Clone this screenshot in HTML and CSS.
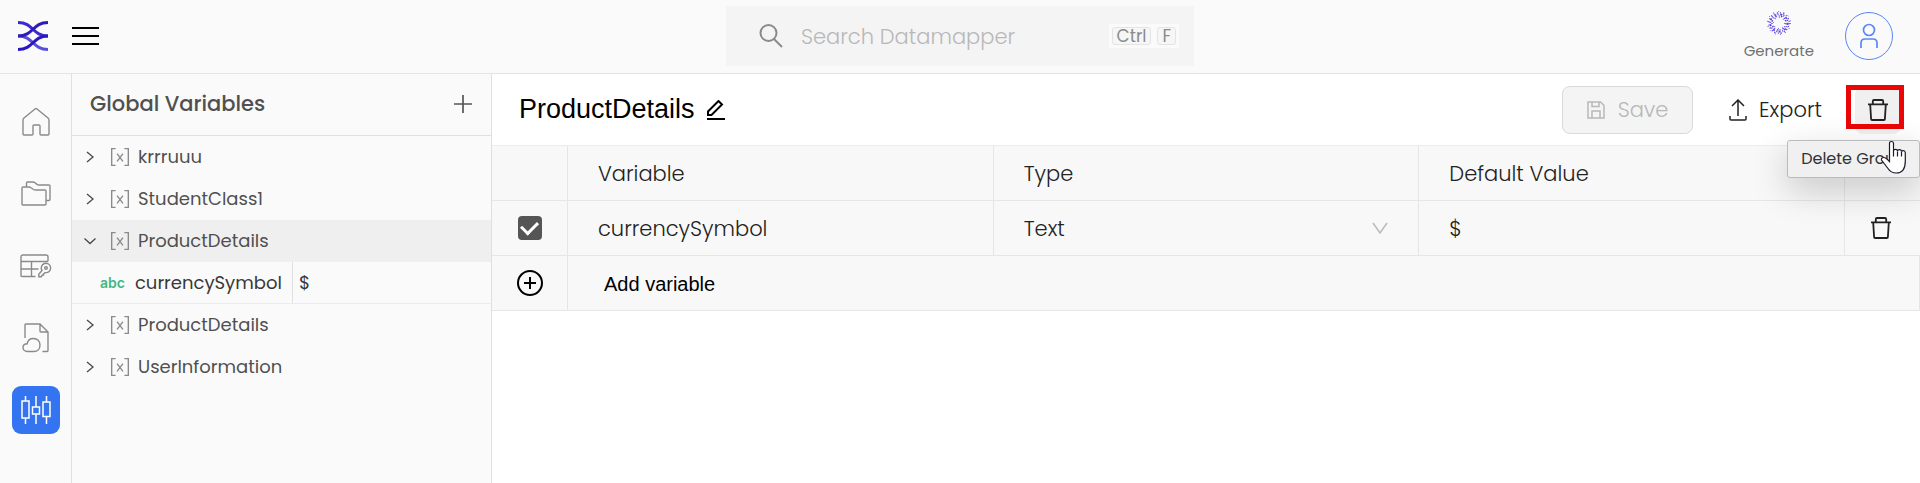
FILE: index.html
```html
<!DOCTYPE html>
<html lang="en">
<head>
<meta charset="utf-8">
<title>Datamapper - Global Variables</title>
<link rel="stylesheet" href="styles.css">
</head>
<body>
<svg class="defs" aria-hidden="true">
  <defs>
    <symbol id="i-var" viewBox="0.8 0.8 18.4 18.4"><path d="M5.500 1.500H1.500v17h4M14.500 1.500h4v17h-4M7 6.500l6 8M13 6.500l-6 8"/></symbol>
    <symbol id="i-right" viewBox="0 0 12 12"><path d="M3 1l6 5-6 5"/></symbol>
    <symbol id="i-down" viewBox="0 0 12 12"><path d="M0.500 3.500l5.500 5 5.500-5"/></symbol>
    <symbol id="i-trash" viewBox="0 0 20 22"><path d="M0 5.300h20M4.800 5V2.200q0-1.200 1.200-1.200h8q1.200 0 1.200 1.200V5M2.200 5.500l.9 14.500q0 1 1 1h11.800q1 0 1-1l.9-14.500"/></symbol>
  </defs>
</svg>

<header class="topbar">
  <div class="brand">
    <a class="logo" href="#" aria-label="Home">
      <svg width="30" height="30" viewBox="0 0 30 30" fill="none" stroke-width="3">
        <path stroke="#3a2ad0" d="M0 1.500C16 1.500 14 15 30 15"/>
        <path stroke="#5b4ddb" d="M0 15C16 15 14 28.500 30 28.500"/>
        <path stroke="#2d1cba" d="M30 1.500C14 1.500 16 15 0 15"/>
        <path stroke="#2a17c4" d="M30 15C14 15 16 28.500 0 28.500"/>
      </svg>
    </a>
    <button class="plain" aria-label="Menu">
      <svg width="27" height="18" viewBox="0 0 27 18" stroke="#000" stroke-width="2"><path d="M0 1h27M0 9h27M0 17h27"/></svg>
    </button>
  </div>
  <label class="search">
    <svg width="24" height="24" viewBox="0 0 24 24" fill="none" stroke="#8a8a8a" stroke-width="2"><circle cx="9.500" cy="9" r="8"/><path d="M15 15l8 8"/></svg>
    <input type="text" placeholder="Search Datamapper" aria-label="Search Datamapper">
    <span class="keys"><kbd>Ctrl</kbd><kbd>F</kbd></span>
  </label>
  <div class="account">
    <button class="plain generate">
      <svg width="24" height="24" viewBox="0 0 24 24" fill="none" stroke="#5a3fe0">
        <circle cx="12" cy="12" r="5.500" stroke-width="1" stroke-dasharray="1 3.200"/>
        <circle cx="12" cy="12" r="7" stroke-width="1.500" stroke-dasharray="1.500 2 1 1.300"/>
        <circle cx="12" cy="12" r="8.700" stroke-width="1.700" stroke-dasharray="2 1.300 1 1.700"/>
        <circle cx="12" cy="12" r="10.200" stroke-width="1.300" stroke-dasharray="1.300 1.900 1 2.300"/>
        <circle cx="12" cy="12" r="11.500" stroke-width="1" stroke-dasharray="1 4.300"/>
      </svg>
      <span>Generate</span>
    </button>
    <button class="avatar" aria-label="Profile">
      <svg width="18" height="26" viewBox="0 0 18 26" fill="none" stroke="#5b86f7" stroke-width="1.700"><circle cx="9" cy="7" r="5.500"/><path d="M1 25v-5q0-4 4-4h8q4 0 4 4v5"/></svg>
    </button>
  </div>
</header>

<div class="workspace">
  <nav class="rail">
    <a href="#" aria-label="Home"><svg width="28" height="28" viewBox="0 0 28 28"><path d="M1 12q0-1 1-2L13 1q1-.8 2 0l11 9q1 1 1 2v14q0 1-1 1h-7q-1 0-1-1v-8q0-1-1-1h-5q-1 0-1 1v8q0 1-1 1H2q-1 0-1-1z"/></svg></a>
    <a href="#" aria-label="Projects"><svg width="30" height="26" viewBox="0 0 30 26"><path d="M1 7q0-1 1-1h6q1 0 2 .8l2.500 1.700q.8.500 2 .5h9.500q1 0 1 1v13q0 1-1 1H2q-1 0-1-1zM5.500 5.500V2q0-1 1-1h5.500q1 0 2 .8l2 1.600q1 .6 2 .6h10q1 0 1 1v13.500q0 1-1 1H25.500"/></svg></a>
    <a href="#" aria-label="Keys"><svg width="32" height="24" viewBox="0 0 32 24"><path d="M15.500 22.500H2q-1 0-1-1V3q0-2 2-2h23q2 0 2 2v3.500q0 1-1 1H1M11.500 7.500v15M1 15h17.500"/><path d="M22 16.500a4.700 4.700 0 1 1 3.200 2.100l-1.700 1.400v1h-1.200l-1 1.700h-2.500v-2.500z"/><circle cx="26" cy="14" r="1.300"/></svg></a>
    <a href="#" aria-label="Cloud files"><svg width="28" height="30" viewBox="0 0 28 30"><path d="M3 15V2q0-1 1-1h14L26 9v18.500q0 1-1 1h-4.500M18 1v7q0 1 1 1h7M5.500 28.500C2.500 28.500 1 26.700 1 24.500S2.700 20.800 5.200 20.700C5.700 17.300 8.500 15.500 11.500 15.500 15.200 15.500 18 18.200 18 22S15.500 28.500 12 28.500z"/></svg></a>
    <a href="#" class="active" aria-label="Global variables"><svg width="30" height="28" viewBox="0 0 30 28"><path d="M4.500 0v5M4.500 22v6M1 5h7v17H1zM15 0v10.500M15 17.500V28M11.500 11h7v7h-7zM25.500 0v6M25.500 20v8M22 6h7v14.500h-7z"/></svg></a>
  </nav>

  <aside class="sidebar">
    <div class="side-head">
      <h2>Global Variables</h2>
      <button class="plain" aria-label="Add group"><svg width="18" height="18" viewBox="0 0 18 18" stroke="#555" stroke-width="1.700"><path d="M0 9h18M9 0v18"/></svg></button>
    </div>
    <ul class="tree">
      <li><button><svg class="caret"><use href="#i-right"/></svg><svg class="var"><use href="#i-var"/></svg>krrruuu</button></li>
      <li><button><svg class="caret"><use href="#i-right"/></svg><svg class="var"><use href="#i-var"/></svg>StudentClass1</button></li>
      <li class="selected"><button><svg class="caret"><use href="#i-down"/></svg><svg class="var"><use href="#i-var"/></svg>ProductDetails</button></li>
      <li class="leaf"><span class="leaf-name"><span class="abc">abc</span>currencySymbol</span><span class="leaf-value">$</span></li>
      <li><button><svg class="caret"><use href="#i-right"/></svg><svg class="var"><use href="#i-var"/></svg>ProductDetails</button></li>
      <li><button><svg class="caret"><use href="#i-right"/></svg><svg class="var"><use href="#i-var"/></svg>UserInformation</button></li>
    </ul>
  </aside>

  <main class="content">
    <div class="group-head">
      <div class="group-title">
        <h1>ProductDetails</h1>
        <button class="plain" aria-label="Rename"><svg width="18" height="20" viewBox="0 0 18 20" fill="none" stroke="#000" stroke-width="2"><path d="M0 19h18M1 15v-3.500L11.500 1 15 4.500 4.500 15z"/></svg></button>
      </div>
      <div class="actions">
        <button class="save" disabled><svg width="18" height="18" viewBox="0 0 18 18" fill="none" stroke="#b8b8b8" stroke-width="1.500"><path d="M1 1h12.500L17 4.500V17H1zM5 1v4.500h7V1M5 17v-7h8v7"/></svg>Save</button>
        <button class="export"><svg width="18" height="22" viewBox="0 0 18 22" fill="none" stroke="#222" stroke-width="1.500"><path d="M9 17V1M3 7l6-6 6 6M1 17v3q0 1 1 1h14q1 0 1-1v-3"/></svg>Export</button>
        <div class="delete-wrap">
          <button class="delete" aria-label="Delete Group" aria-describedby="tip"><svg class="trash"><use href="#i-trash"/></svg></button>
          <span class="highlight"></span>
          <span class="tooltip" id="tip" role="tooltip">Delete Group</span>
          <svg class="pointer" width="26" height="34" viewBox="0 0 26 34" fill="#fff" stroke="#1b1b2e" stroke-width="1.200"><path d="M9.500 19V3.500q0-2 2-2t2 2V11q0-1.700 2-1.700t2 1.900q0-1.500 2-1.500t2 2q.2-1 1.900-1t1.900 2V21q0 12-9 12-5.500 0-8.300-4.500L1.500 20q-.5-2 2-2.500 2-.2 6 4z"/><path d="M13.500 11v5.500M17.500 11.500v5M21.500 12v4.500" fill="none"/></svg>
        </div>
      </div>
    </div>
    <table class="vars">
      <colgroup><col class="c-check"><col><col><col><col class="c-act"></colgroup>
      <thead>
        <tr><th></th><th>Variable</th><th>Type</th><th>Default Value</th><th></th></tr>
      </thead>
      <tbody>
        <tr>
          <td class="center"><input type="checkbox" checked aria-label="Select currencySymbol"></td>
          <td><input type="text" value="currencySymbol" aria-label="Variable name"></td>
          <td><div class="select"><select aria-label="Type"><option>Text</option></select><svg width="16" height="12" viewBox="0 0 16 12" fill="none" stroke="#bbb" stroke-width="1.500"><path d="M1 1l7 10 7-10"/></svg></div></td>
          <td><input type="text" value="$" aria-label="Default value"></td>
          <td class="center act"><button class="plain" aria-label="Delete variable"><svg class="trash"><use href="#i-trash"/></svg></button></td>
        </tr>
        <tr>
          <td class="center"><button class="plain" aria-label="Add"><svg width="26" height="26" viewBox="0 0 26 26" fill="none" stroke="#000" stroke-width="2"><circle cx="13" cy="13" r="12"/><path d="M7 13h12M13 7v12"/></svg></button></td>
          <td colspan="4" class="last"><button class="plain add">Add variable</button></td>
        </tr>
      </tbody>
    </table>
  </main>
</div>
</body>
</html>
```
FILE: styles.css
```css
* { box-sizing: border-box; }
body {
  margin: 0;
  min-height: 100vh;
  display: flex;
  flex-direction: column;
  overflow: hidden;
  background: #fff;
  color: #222;
  font-family: Poppins, Inter, sans-serif;
  font-weight: 300;
  font-size: 20px;
}
svg { display: block; flex: none; }
.defs { position: absolute; width: 0; height: 0; }
button, input, select { font: inherit; color: inherit; }
button { padding: 0; border: 0; background: none; cursor: pointer; }
h1, h2 { margin: 0; }

.topbar {
  display: grid;
  grid-template-columns: 1fr 468px 1fr;
  align-items: center;
  height: 74px;
  padding-bottom: 1px;
  background: #fafafa;
  border-bottom: 1px solid #e4e4e4;
}
.brand { display: flex; align-items: center; gap: 24px; padding-left: 18px; }
.search {
  display: flex;
  align-items: center;
  height: 60px;
  padding: 0 15px 0 33px;
  background: #f4f4f4;
}
.search input {
  flex: 1;
  min-width: 0;
  margin-left: 18px;
  padding: 0;
  border: 0;
  background: none;
  font-size: 21px;
}
.search input::placeholder { color: #b8b8b8; opacity: 1; }
.keys { display: flex; gap: 6px; padding: 3px; background: #fafafa; }
kbd {
  height: 18px;
  padding: 0 4px;
  border: 1px solid #e4e4e4;
  border-radius: 3px;
  background: #f6f6f6;
  color: #8a8a8a;
  font: 400 17px/16px Poppins, Inter, sans-serif;
}
.account { display: flex; justify-content: flex-end; align-items: center; gap: 31px; padding-right: 27px; }
.generate {
  display: flex;
  flex-direction: column;
  align-items: center;
  gap: 6px;
  color: #707070;
  font-size: 15px;
  font-weight: 400;
  line-height: 20px;
}
.avatar {
  display: grid;
  place-items: center;
  width: 48px;
  height: 48px;
  border: 1px solid #5b86f7;
  border-radius: 50%;
}

.workspace { display: flex; flex: 1; }
.rail {
  display: flex;
  flex-direction: column;
  align-items: center;
  gap: 24px;
  width: 72px;
  padding-top: 24px;
  background: #fafafa;
  border-right: 1px solid #e0e0e0;
}
.rail a { display: grid; place-items: center; width: 48px; height: 48px; border-radius: 9px; }
.rail svg { fill: none; stroke: #8a8a8a; stroke-width: 1.4; }
.rail .active { background: #3574f0; }
.rail .active svg { stroke: #fff; stroke-width: 1.5; }

.sidebar { width: 420px; background: #fafafa; border-right: 1px solid #e0e0e0; }
.side-head {
  display: flex;
  justify-content: space-between;
  align-items: center;
  height: 62px;
  padding: 0 19px 2px 18px;
  border-bottom: 1px solid #e0e0e0;
}
h2 { font-size: 21px; font-weight: 500; color: #505050; }
.tree { margin: 0; padding: 0; list-style: none; font-size: 18px; font-weight: 400; color: #505050; }
.tree li { height: 42px; }
.tree button { display: flex; align-items: center; width: 100%; height: 100%; padding: 0 0 1px 12px; text-align: left; }
.caret { width: 12px; height: 12px; fill: none; stroke: #484848; stroke-width: 1.3; }
.var { width: 18px; height: 18px; margin: 0 9px 0 15px; fill: none; stroke: #8a8a8a; stroke-width: 1.4; }
.tree .selected { background: #efefef; }
.tree .leaf { display: flex; align-items: stretch; border-bottom: 1px solid #ececec; color: #383838; }
.leaf-name { display: flex; align-items: center; gap: 10px; width: 221px; padding: 0 0 1px 28px; border-right: 1px solid #e0e0e0; }
.leaf-value { display: flex; align-items: center; padding: 0 0 1px 6px; }
.abc { color: #3fb984; font: 600 14px Inter, sans-serif; }

.content { flex: 1; min-width: 0; }
.group-head {
  display: flex;
  justify-content: space-between;
  align-items: center;
  height: 71px;
  padding: 0 19px 0 27px;
}
.group-title { display: flex; align-items: center; gap: 12px; }
h1 { color: #000; font: 400 27px "Liberation Sans", Arial, sans-serif; }
.actions { display: flex; align-items: center; }
.actions button { display: flex; align-items: center; justify-content: center; height: 48px; border-radius: 8px; }
.save {
  gap: 13px;
  width: 131px;
  background: #f4f4f4;
  border: 1px solid #d9d9d9;
  color: #b8b8b8;
  font-size: 21px;
}
.export { gap: 12px; margin: 0 33px 0 36px; font-size: 21px; }
.delete-wrap { position: relative; }
.delete { width: 46px; background: #f0f0f0; }
.trash { width: 20px; height: 22px; fill: none; stroke: #222; stroke-width: 1.8; }
.highlight {
  position: absolute;
  inset: -1px -3px 5px -9px;
  border: 5px solid #ea0606;
  pointer-events: none;
}
.tooltip {
  position: absolute;
  top: 54px;
  right: -19px;
  padding: 8px 13px;
  background: #f0f0f0;
  border: 1px solid #bbb;
  border-radius: 3px;
  box-shadow: 0 12px 36px rgba(0, 0, 0, .2);
  color: #333;
  font-size: 16px;
  font-weight: 400;
  line-height: 20px;
  white-space: nowrap;
}
.pointer { position: absolute; top: 54px; right: -5px; }

.vars { width: 100%; table-layout: fixed; border-collapse: separate; border-spacing: 0; background: #f8f8f8; border-top: 1px solid #ececec; }
.c-check { width: 76px; }
.c-act { width: 75px; }
.vars th, .vars td {
  height: 55px;
  padding: 0 30px;
  border-right: 1px solid #e6e6e6;
  border-bottom: 1px solid #e6e6e6;
  text-align: left;
  font-weight: 300;
  font-size: 21px;
}
.vars tr > :nth-child(5) { border-right: 0; }
.vars .center { padding: 0; }
.vars .act { padding-right: 3px; }
.center > * { display: block; margin: 0 auto; }
.vars input[type="text"], .vars select { width: 100%; padding: 0; border: 0; background: none; }
.select { display: flex; align-items: center; }
.vars select { appearance: none; flex: 1; }
input[type="checkbox"] {
  appearance: none;
  display: grid;
  place-items: center;
  width: 24px;
  height: 24px;
  border-radius: 4px;
  background: #555;
}
input[type="checkbox"]::after {
  content: "";
  width: 8px;
  height: 13px;
  margin-bottom: 4px;
  border: solid #fff;
  border-width: 0 3px 3px 0;
  rotate: 45deg;
}
.vars .last { padding-left: 36px; }
.add { color: #000; font: 400 20px "Liberation Sans", Arial, sans-serif; }
```
